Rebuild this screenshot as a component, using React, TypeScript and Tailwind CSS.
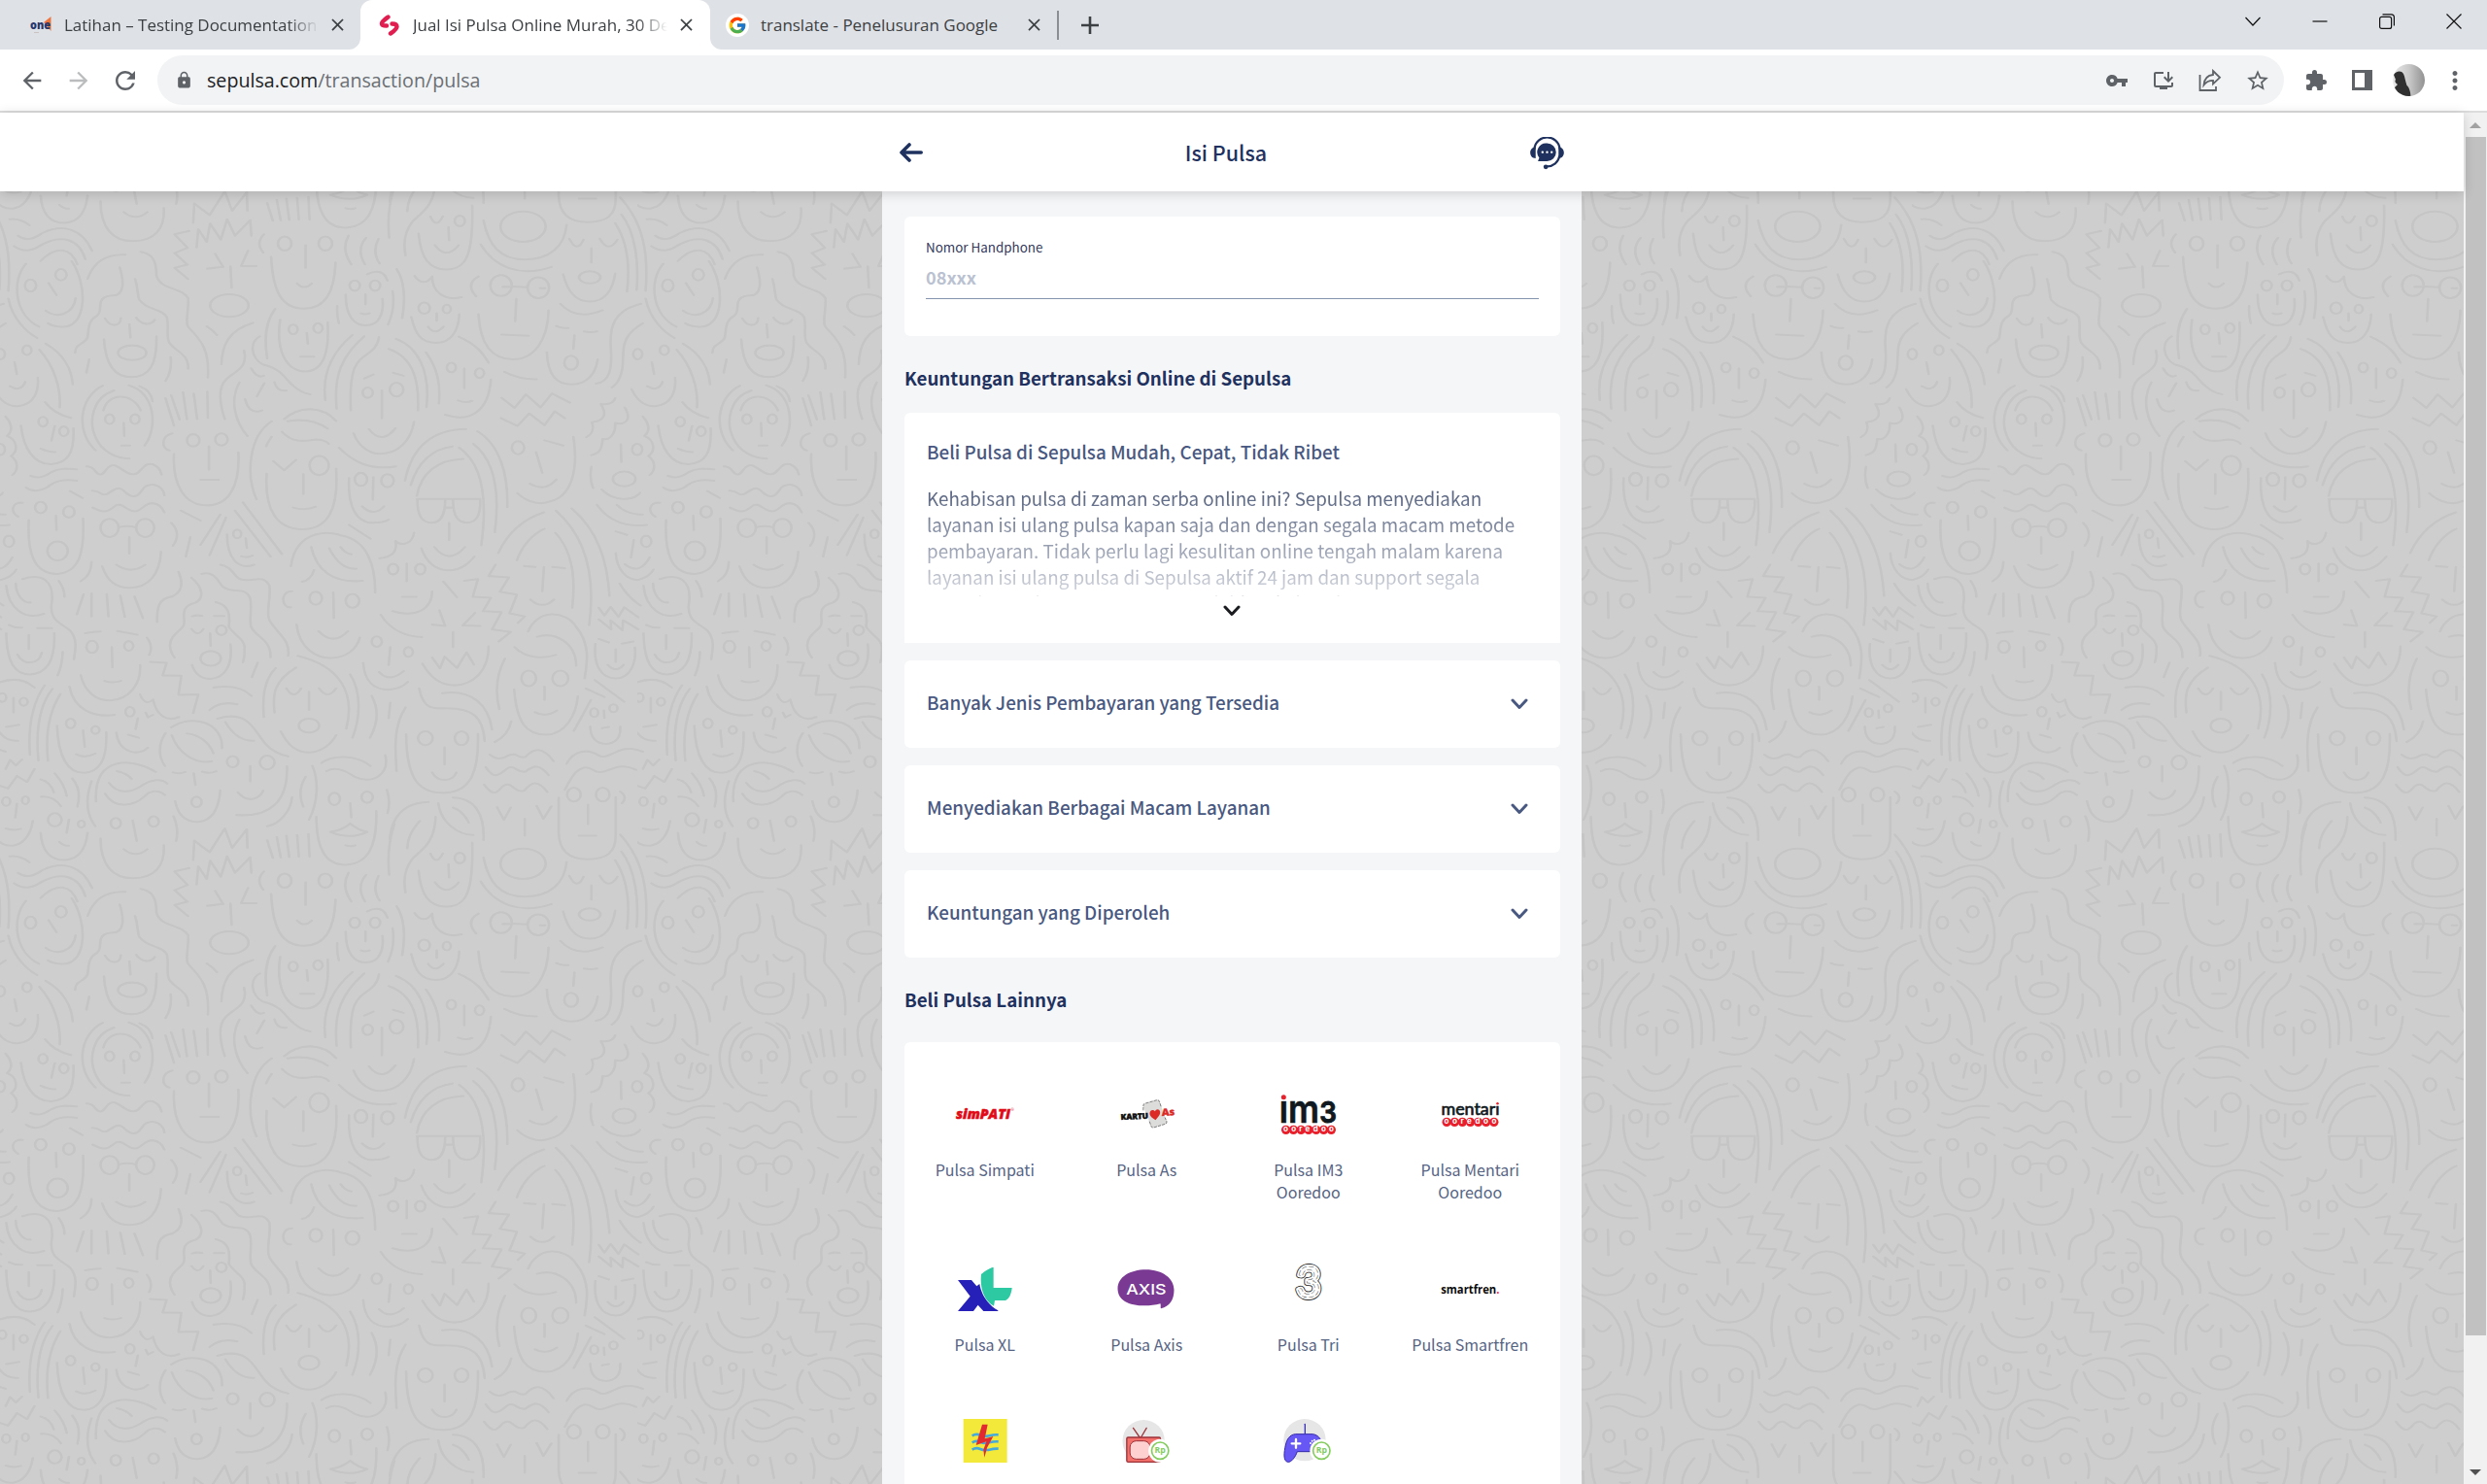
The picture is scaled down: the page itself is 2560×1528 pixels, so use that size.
import React from 'react';
import {
  MdArrowBack,
  MdArrowForward,
  MdClose,
  MdExtension,
  MdInstallDesktop,
  MdLock,
  MdMoreVert,
  MdRefresh,
  MdStarBorder,
  MdVpnKey,
} from 'react-icons/md';
import { FcGoogle } from 'react-icons/fc';

/* ---------- Doodle wallpaper ---------- */

// One tile is drawn in a 1128.2 x 1469.4 grid and shown at 656 x 656 pixels.
const TILE_W = 1128.2;
const TILE_H = 1469.4;

const STROKES = [
  'M72 1495Q75 1558 115 1558Q150 1555 155 1495M105 1516Q112 1525 122 1525M122 1465L118 1495',
  'M30 1428L27 1460M10 1485Q25 1491 37 1486M-10 1500C0 1535 50 1540 58 1468M-6 1384L14 1393L30 1364L48 1378L61 1348M10 1348L18 1327L28 1340L39 1326',
  'M72 1372Q90 1378 95 1402M97 1358Q115 1385 118 1410M128 1370Q145 1395 137 1435M73 1412Q95 1410 108 1434',
  'M170 1423C165 1310 240 1325 276 1355M162 1376Q145 1440 169 1480M207 1353Q225 1358 233 1371M193 1380C210 1410 235 1400 250 1387C265 1373 285 1368 296 1382M186 1405C205 1445 240 1430 255 1412C265 1398 280 1394 292 1408',
  'M235 1467L242 1514M219 1533Q240 1555 261 1533M178 1508C178 1570 200 1600 235 1600C275 1600 292 1570 290 1524M307 1457Q317 1485 312 1514',
  'M342 1558L344 1513L371 1540L398 1485L411 1530L437 1487L438 1530M348 145L351 103L366 132L372 90L391 127L402 80L416 118L443 82L445 118M335 107L309 115L332 146L309 158L332 185L309 192L333 218',
  'M473 1512L483 1553M490 1505L497 1552M507 1502L512 1551M526 1500L529 1550M546 1498L548 1550',
  'M541 140L541 192M526 228Q538 245 552 228M480 167C483 250 500 286 538 286C575 286 592 250 594 180M467 115Q452 135 466 157',
  'M620 1427L622 1460M585 1493Q605 1490 620 1474Q635 1490 650 1493Q620 1512 585 1493M612 1524Q620 1528 629 1524M560 1458C560 1530 575 1569 612 1569C650 1567 668 1530 666 1445',
  'M578 1353C595 1340 615 1355 628 1366C660 1385 690 1360 682 1316M569 1334C590 1315 630 1315 656 1341M541 1366Q525 1400 537 1435M553 1341C563 1370 565 1420 547 1465M685 1396Q692 1425 686 1450M698 1475Q684 1530 689 1592',
  'M617 118Q603 150 622 184M648 123Q630 150 646 184M670 125Q658 155 672 182',
  'M690 1510C695 1440 730 1425 759 1424M743 1468C725 1495 722 1510 721 1531M776 1427C780 1470 810 1500 838 1500M802 1437Q820 1445 830 1472M802 1414C840 1415 858 1450 856 1512',
  'M771 1458C770 1520 745 1535 730 1555C718 1575 713 1600 718 1633M762 1543Q772 1573 784 1543M794 98L795 129M770 140Q790 175 812 140M741 113C745 170 760 196 790 196C825 196 838 165 836 48',
  'M856 83C865 140 885 173 928 173C975 173 1000 140 1003 93M851 138C875 190 920 215 976 190M880 1436L892 1465L904 1437M950 1433L962 1463L976 1434M929 1463L929 1502',
  'M1041 1430L1041 1475M1025 1502H1055M989 1414L989 1495C990 1540 1010 1556 1040 1556C1075 1556 1090 1540 1090 1500L1090 1413M1098 1400Q1112 1412 1101 1427M1000 1396C1010 1370 1025 1330 1050 1350C1070 1370 1090 1325 1126 1350M1003 1336C1015 1305 1040 1300 1060 1317C1080 1330 1095 1285 1138 1308',
  'M867 1315C880 1328 888 1325 900 1317C915 1308 918 1325 930 1320C945 1300 960 1295 980 1330M860 1344C875 1375 885 1360 897 1348C910 1335 915 1358 930 1354C945 1340 955 1335 971 1362M857 1384C875 1415 880 1400 890 1388C905 1372 910 1405 928 1398C940 1380 950 1370 969 1401',
  'M1008 125Q1022 160 1033 127M1062 125Q1078 160 1093 127M1047 147V180M997 207C1005 250 1020 270 1044 270C1070 270 1085 245 1089 205M992 275Q1020 315 1067 290M1089 89C1110 130 1116 180 1110 247M1100 69C1125 110 1131 180 1127 243M1098 30C1140 90 1148 160 1143 245M1143 263C1150 310 1175 340 1194 354',
  'M86 227L100 255M81 291C100 310 130 300 134 262M46 183C20 220 25 300 69 328M72 176C100 140 125 145 137 184M127 177C155 230 155 330 110 328Q95 328 85 320M32 118C50 135 65 120 75 112C110 90 145 100 163 153M25 142C45 160 60 150 75 138C110 115 140 125 151 172M17 80C30 78 45 85 52 94',
  'M155 218C165 180 185 160 222 162M212 191C220 225 220 255 200 256C165 258 185 290 172 302C155 315 158 330 155 352C150 370 133 365 133 388M239 218C243 230 243 250 246 265C260 290 285 285 295 305C300 325 293 350 300 365C310 385 335 390 333 425M249 155C270 160 277 175 277 210C285 245 320 235 333 262C335 285 328 310 332 326C345 350 372 365 368 445',
  'M186 309C195 330 213 328 214 308M241 307C250 325 268 325 274 312M229 322L231 353M184 357C187 420 205 444 232 444C265 444 278 415 277 350M302 398Q305 430 293 453M158 403L153 434',
  'M381 160L395 190L367 194M439 153L427 188L454 188M408 189L410 238',
  'M647 253V276M639 297Q647 301 654 297M612 254C612 300 625 325 648 325C672 325 680 295 677 263M650 207Q678 190 686 222M702 195C716 220 718 265 712 308M695 246Q700 285 687 323M597 280Q596 300 600 320',
  'M773 297V314M758 328Q770 350 785 328M728 305C735 345 745 365 772 365C800 365 812 335 813 299M734 211Q750 238 765 212C765 245 785 270 817 260',
  'M906 235L934 237M890 236H901M956 239H965M914 264L912 315M888 346L936 349M847 299C850 370 870 403 908 403C945 403 970 360 971 290M847 212Q823 230 843 258',
  'M985 326Q992 331 1006 331M1034 339Q1045 342 1057 339M1017 348L1015 379M968 387C970 440 985 461 1012 461C1040 461 1055 435 1058 403M1135 275C1085 290 1080 330 1081 370C1085 430 1078 455 1055 459M1138 320C1105 345 1103 370 1103 400C1103 440 1093 460 1083 468',
  'M1154 410L1158 437M1146 465Q1165 480 1173 455M1118 472C1130 505 1145 512 1160 511C1190 508 1197 475 1195 445M1198 381C1225 420 1236 470 1234 514M1209 367C1240 390 1255 425 1257 461M1208 502Q1225 530 1254 538',
  'M543 342L545 367M532 397H556M496 312C488 380 505 430 541 431C575 430 583 380 580 318M487 287C468 320 468 360 473 401',
  'M448 319C405 335 393 370 392 415M432 383C440 425 415 430 400 450C385 470 390 510 398 541M424 456C405 500 418 550 438 580M460 350C440 365 445 400 465 415C500 425 505 450 520 465Q533 480 549 484M445 424Q455 448 467 441M486 456Q490 478 507 475M468 458L455 488M434 495C438 520 450 528 464 521M366 327Q378 337 384 347',
  'M624 347C585 390 570 440 576 497M645 350C605 395 590 440 596 517M671 352C665 395 640 385 627 425C620 450 620 490 621 521M688 379C735 400 742 460 740 521M701 356C740 375 762 430 755 513M754 387C775 425 780 460 777 505M645 447L661 438M696 434L714 441M676 475V539M653 564Q676 602 700 562M626 574C635 605 655 621 673 621C705 621 728 590 733 547M600 607C625 640 655 660 701 650',
  'M822 424V470M811 498Q825 505 836 499M788 531C830 550 865 525 869 450M812 351C845 370 855 390 865 411M893 432Q920 450 950 449',
  'M888 492L911 515L931 484L957 514L977 482L1009 503M887 539L916 557L937 528L964 555L982 523L1000 539',
  'M964 590L997 602M949 617L960 665M938 690Q965 710 985 680M916 712C935 735 960 740 975 730C1010 720 1025 660 1015 582',
  'M1064 506Q1085 510 1089 493M1064 507C1075 530 1070 545 1048 548C1053 570 1045 578 1038 583M1106 514C1120 545 1105 555 1089 550C1090 575 1080 590 1067 587C1065 610 1062 620 1047 624M1138 535C1155 560 1145 575 1141 580C1160 590 1160 615 1148 626C1162 640 1160 660 1150 670M1099 599L1100 640M1065 703C1085 730 1120 732 1133 711M1047 651Q1043 680 1050 700',
  'M97 557L91 591M72 609Q85 617 98 617M37 556C42 610 60 645 90 645C120 643 132 620 130 562',
  'M182 464C140 490 133 570 169 613M202 475C165 490 155 545 170 585C180 615 205 632 229 632M228 463C275 480 280 560 256 602M247 465Q268 475 270 500M183 521C190 480 235 478 249 521M219 550L220 580M215 602H230',
  'M293 493L308 556M303 486L318 542M324 479L331 541M343 482L349 541M367 478L368 538',
  'M370 604V658M355 681H387M308 621C305 690 325 740 367 740C405 740 425 695 422 618M305 574C285 580 285 610 300 613',
  'M484 638L503 659L524 635M537 668V714M519 745Q540 753 559 743M472 667C468 750 490 795 535 795C580 795 600 750 595 655M481 546C440 580 435 670 454 726M503 541C530 510 570 510 595 545M509 546C535 540 560 545 580 563M499 570C520 600 545 590 558 588Q575 588 582 598M481 582Q475 592 471 604',
  'M661 675L660 727M641 742Q662 768 680 742M618 677C615 740 630 780 660 780Q678 780 688 773',
  'M738 725H850M739 725C738 765 748 780 764 780C780 780 788 765 788 727M802 727C802 765 810 780 828 780C843 778 851 765 850 725M788 745H802M795 780V820M769 836Q795 878 823 836M746 839C755 875 775 890 795 890C820 888 832 870 840 858',
  'M717 683C730 600 770 565 825 564M727 693C740 640 765 610 801 604M738 718C745 665 775 635 820 633M813 607C850 640 865 710 852 832M838 598C875 635 885 710 876 802M845 569C885 600 900 670 898 744',
  'M153 650Q163 650 168 660C180 680 185 660 192 652C205 635 218 668 235 668C250 670 252 640 270 645Q283 650 286 669M163 706C180 705 178 722 192 712C210 695 215 700 222 710C245 735 250 700 258 696C275 685 290 700 291 717M164 745C180 755 188 758 200 745C212 730 220 745 232 752C250 760 252 735 270 735Q285 737 291 756',
  'M54 672C70 680 80 672 90 664C105 653 120 655 136 657M46 699C60 712 78 705 90 692C105 680 120 680 136 683M124 707L146 723',
  'M99 764L100 797M51 774C48 850 60 898 101 898C140 895 150 850 147 770M40 734C20 732 18 755 32 766',
  'M210 791Q225 785 241 791M229 813V851M206 877Q232 900 257 877M181 881C190 915 205 930 230 930C262 930 283 900 285 847M303 780Q322 805 306 833M162 870Q162 900 143 915',
  'M320 752L355 775M337 813L329 858M390 761L355 831M400 768L371 855M430 733L499 852M416 752L479 858M435 816L437 838M427 857Q437 862 447 856M402 807C402 860 420 890 450 877',
  'M515 880C525 790 590 800 605 810C650 820 665 880 664 941M551 836C560 890 590 920 642 914M583 839C595 870 610 888 631 886M603 836Q610 850 622 853M556 889Q550 912 535 916M590 941L591 1000M564 1030Q590 1065 616 1030M525 1015C530 1070 560 1093 588 1092C615 1090 632 1070 637 1045M517 938C495 938 498 978 515 975',
  'M618 785L656 817M733 803C730 830 710 835 700 822C705 850 690 860 672 862M720 874V915M712 951H737M695 984C735 1000 765 980 765 938M785 916L809 952',
  'M877 877L865 903L901 906L885 939L915 946L902 989L929 996L917 1011M822 914L846 910L837 951L869 953L855 984L888 986L871 1026L904 1032L883 1054',
  'M778 982L788 1018L765 1015M841 988L819 1017L850 1018M802 1032V1067M765 1091L779 1116L787 1089L809 1115L826 1079L839 1107M748 1105C765 1145 785 1155 805 1155C840 1153 865 1120 865 1065M674 992C690 1025 715 1042 747 1044',
  'M882 850C900 800 930 770 963 756M915 867C925 830 945 805 964 794M983 803C1010 840 1020 900 1013 976M984 752C1035 810 1055 900 1043 1016M1012 747C1060 800 1075 870 1079 949M928 880L948 882M978 882L1000 885M963 882L960 938M939 957Q960 982 981 957',
  'M1060 976L1070 994L1081 974L1095 997L1105 975L1130 998M1060 1003L1082 1026L1081 1005L1102 1028L1103 1005L1130 1026M1060 1048L1078 1056M1101 1059L1121 1054M1090 1072V1101M1076 1108Q1090 1128 1104 1108M1054 1059C1050 1110 1065 1139 1090 1139C1115 1139 1127 1105 1124 1068',
  'M1097 920Q1110 950 1134 971M1057 739C1080 780 1110 790 1145 785M1092 739Q1110 762 1138 761M1090 800L1110 808M1122 820L1117 860M1106 876C1125 895 1140 885 1150 860M1090 850C1092 890 1110 912 1130 912Q1150 905 1157 888',
  'M11 925C15 980 45 1005 78 990M28 920C28 945 40 965 54 964M40 910C75 895 95 915 92 960C85 1010 110 1010 125 1030C138 1050 133 1075 131 1095M104 914Q115 935 114 951M16 1016Q27 1023 39 1022M66 1023H92M51 1039V1071M31 1084C40 1110 70 1108 74 1080M11 1035C12 1100 25 1130 53 1130C85 1128 98 1095 96 1035M111 1078Q110 1110 102 1132',
  'M148 945L136 991M162 943V996M189 945L192 996M213 948L221 997M238 950L253 1000M151 1035Q165 1031 178 1031M208 1030L243 1038M198 1067L199 1114M185 1145Q200 1151 214 1145M143 1132C150 1170 170 1190 195 1190C230 1188 250 1150 248 1108M260 1045Q272 1065 264 1085M123 1158C130 1210 165 1230 203 1223',
  'M316 893C325 920 322 940 305 950C280 955 278 975 278 1009M339 907C360 930 362 955 345 965C315 975 330 1000 325 1017C320 1030 300 1040 301 1064Q302 1080 309 1091M382 963C405 970 408 990 405 1020C415 1040 435 1050 433 1070Q433 1090 430 1102M357 898C380 890 385 915 395 928C410 945 435 925 443 955C447 980 440 1005 445 1022C455 1045 480 1050 479 1090M390 877C410 880 415 905 425 910C445 920 465 895 477 925C480 960 470 985 477 1005C490 1035 515 1050 510 1087',
  'M340 996Q350 992 358 995M379 995H397M339 1025Q350 1045 360 1025M372 1035L373 1064M340 1108C345 1130 358 1140 372 1140C400 1138 412 1105 408 1060M456 1103L446 1136',
  'M266 1101L295 1103L288 1132L321 1133L316 1177L351 1176L342 1219M378 1160C405 1155 430 1160 445 1179M371 1212Q390 1190 420 1199M248 1176C255 1200 265 1195 271 1188C277 1225 295 1240 317 1228M258 1218L262 1229L271 1223M244 1231L240 1256M227 1269L246 1276M206 1264C210 1310 245 1320 262 1299',
  'M147 1259L150 1297M135 1314Q150 1325 169 1312M101 1248C103 1320 120 1357 149 1357C180 1355 190 1320 188 1263M79 1155C55 1200 50 1260 53 1315M93 1163C70 1200 63 1260 68 1328M107 1175C85 1220 80 1270 85 1329',
  'M-5 1150Q35 1130 61 1160M24 1184V1218M11 1251L34 1246M-14 1195C-12 1260 5 1285 32 1283',
  'M303 1252C340 1220 395 1240 393 1300M293 1265C280 1290 280 1320 292 1341M304 1270C315 1310 345 1338 375 1330M331 1266C350 1268 370 1285 378 1312M385 1232C440 1210 450 1260 470 1290Q485 1312 510 1319M399 1240Q420 1285 450 1283',
  'M306 1356Q318 1360 328 1355M358 1354Q370 1360 383 1353M343 1358L346 1385M310 1422C315 1455 330 1470 350 1470C380 1468 388 1430 390 1397M443 1341V1377M421 1402C440 1430 460 1415 466 1398M508 1342C510 1420 480 1460 419 1454M517 1413C515 1445 495 1475 473 1480',
  'M488 1115C465 1145 465 1190 467 1228M524 1114C485 1145 482 1175 486 1218M527 1087C600 1110 630 1170 613 1255M620 1130C640 1170 638 1230 624 1276M658 1179Q677 1225 655 1276M507 1162Q520 1190 533 1162M565 1162Q580 1190 595 1162M547 1170V1212M497 1261C510 1295 525 1310 548 1310C570 1308 587 1290 595 1270M691 1195L688 1231',
  'M691 1067L688 1108M671 1124Q690 1150 715 1122M643 1103C645 1145 662 1165 688 1165Q710 1163 722 1147',
  'M718 1206C695 1250 700 1310 702 1353M742 1162C750 1215 770 1208 790 1208C835 1208 855 1225 858 1284M783 1173C835 1163 865 1200 871 1257M905 1238Q900 1270 876 1286M787 1298V1338M765 1356C775 1380 802 1378 808 1356M719 1268C720 1360 735 1403 785 1403C835 1403 848 1350 846 1267',
  'M894 1093C875 1140 878 1180 884 1210M911 1067C930 1092 960 1095 984 1085M951 1043C985 1030 1020 1060 1020 1110M935 1031C950 980 1000 980 1020 1020C1045 1060 1040 1100 1035 1139M964 1158V1189M947 1217Q967 1230 986 1213M910 1164C915 1240 930 1268 967 1269C1000 1268 1020 1225 1023 1180',
  'M1037 1162L1070 1182M1053 1143L1105 1193M1046 1189L1016 1260M1069 1213L1070 1230M1066 1254L1078 1251M1045 1250C1045 1275 1055 1290 1073 1290Q1100 1288 1098 1250',
].join('');

// cx, cy, rx, ry
const RINGS: number[][] = [
  [97, 1465, 12, 15], [144, 1475, 6, 8], [11, 1423, 7, 10], [45, 1420, 6, 9], [205, 1473, 9, 12], [272, 1469, 9, 12],
  [504, 136, 12, 16], [576, 136, 12, 16], [592, 1417, 10, 14], [650, 1413, 10, 13], [814, 84, 9, 12], [926, 97, 40, 35],
  [1016, 1407, 12, 16], [1067, 1407, 12, 16], [1044, 214, 19, 14], [54, 233, 10, 14], [108, 208, 10, 13], [234, 388, 25, 17],
  [406, 279, 34, 26], [628, 233, 9, 12], [664, 233, 9, 12], [751, 285, 10, 13], [791, 287, 7, 10], [887, 233, 19, 24],
  [953, 238, 19, 24], [1011, 411, 12, 16], [1129, 391, 8, 12], [1176, 382, 8, 11], [519, 334, 8, 11], [563, 331, 8, 11],
  [651, 480, 9, 12], [702, 473, 12, 16], [799, 422, 8, 11], [849, 435, 8, 11], [917, 607, 11, 15], [1128, 611, 9, 13],
  [1105, 679, 20, 17], [76, 547, 8, 11], [113, 569, 8, 11], [194, 541, 8, 11], [239, 541, 8, 11], [342, 590, 11, 14],
  [392, 588, 11, 14], [565, 648, 17, 22], [639, 680, 11, 15], [686, 683, 11, 15], [72, 745, 10, 13], [122, 755, 10, 13],
  [102, 845, 18, 22], [194, 792, 16, 21], [257, 792, 16, 21], [420, 806, 7, 10], [559, 954, 11, 15], [624, 960, 12, 16],
  [696, 887, 9, 12], [744, 887, 9, 12], [1144, 823, 9, 13], [163, 1066, 10, 14], [228, 1064, 8, 11], [392, 1028, 9, 11],
  [373, 1093, 18, 17], [230, 1216, 8, 11], [125, 1243, 8, 11], [169, 1258, 7, 9], [4, 1183, 7, 10], [42, 1193, 7, 9],
  [348, 1424, 9, 12], [412, 1331, 10, 13], [473, 1333, 13, 16], [547, 1248, 18, 16], [667, 1054, 9, 12], [723, 1078, 8, 11],
  [753, 1277, 13, 16], [817, 1277, 12, 16], [936, 1139, 13, 18], [992, 1139, 14, 18], [1052, 1218, 7, 10], [1086, 1208, 7, 9],
];

function Wallpaper() {
  const copies = [0, -1].flatMap((i) => [0, -1].map((j) => [i * TILE_W, j * TILE_H]));
  return (
    <svg className="absolute inset-0 h-full w-full" aria-hidden="true">
      <defs>
        <g id="faces" fill="none" stroke="#c5c5c5" strokeWidth="4.6" strokeLinecap="round" strokeLinejoin="round">
          <path d={STROKES} />
          {RINGS.map(([cx, cy, rx, ry], i) => (
            <ellipse key={i} cx={cx} cy={cy} rx={rx} ry={ry} />
          ))}
        </g>
        <pattern id="tile" width="656" height="656" y="-7" patternUnits="userSpaceOnUse">
          <g transform={`scale(${656 / TILE_W} ${656 / TILE_H})`}>
            {copies.map(([x, y], i) => (
              <use key={i} href="#faces" x={x} y={y} />
            ))}
          </g>
        </pattern>
      </defs>
      <rect width="100%" height="100%" fill="url(#tile)" />
    </svg>
  );
}

/* ---------- Browser chrome ---------- */

function Flare({ side }: { side: 'left' | 'right' }) {
  return (
    <svg
      viewBox="0 0 12 12"
      className={side === 'left' ? 'absolute bottom-0 -left-3 h-3 w-3' : 'absolute bottom-0 -right-3 h-3 w-3'}
    >
      <path d={side === 'left' ? 'M12 0V12H0A12 12 0 0 0 12 0Z' : 'M0 0V12H12A12 12 0 0 1 0 0Z'} fill="#fff" />
    </svg>
  );
}

function TabStrip() {
  return (
    <div className="flex h-[51px] shrink-0 items-stretch bg-[#dee1e6] font-['Open_Sans',sans-serif] text-[16.97px] text-[#3c4043]">
      <div className="flex w-[371px] items-center pl-[31px]">
        <svg viewBox="0 0 22 22" className="h-[22px] w-[22px] overflow-visible">
          <path d="M14 8L21.500 2V17Z" fill="#f0763f" />
          <text x="0" y="15" fontSize="13" fontWeight="800" fill="#26356b" textLength="21" lengthAdjust="spacingAndGlyphs">
            one
          </text>
          <path d="M4 18.500H9" stroke="#c9c3c3" strokeWidth="1" />
        </svg>
        <div className="ml-[13px] w-[262px] overflow-hidden whitespace-nowrap [mask-image:linear-gradient(90deg,#000_88%,transparent)]">
          Latihan – Testing Documentation
        </div>
        <MdClose className="ml-[9px] size-[21px]" />
      </div>
      <div className="relative flex w-[360px] items-center rounded-t-xl bg-white pl-[19px]">
        <Flare side="left" />
        <Flare side="right" />
        <svg viewBox="0 0 22 22" className="h-[22px] w-[22px]" fill="none" stroke="#e01e50" strokeLinecap="round" strokeLinejoin="round">
          <path d="M9.500 2.500C6 5 3 7 3 9.500C3 11.500 5.500 11.500 8 11.500" strokeWidth="4.400" />
          <path d="M13.500 9.500C16.500 9.500 18.500 10.500 18.500 12.500C18.500 15 15.500 17 12 19.500" strokeWidth="4.400" />
        </svg>
        <div className="ml-[13px] w-[262px] overflow-hidden whitespace-nowrap [mask-image:linear-gradient(90deg,#000_88%,transparent)]">
          Jual Isi Pulsa Online Murah, 30 Detik
        </div>
        <MdClose className="ml-[9px] size-[21px]" />
      </div>
      <div className="flex w-[359px] items-center pl-4">
        <div className="grid size-6 place-items-center rounded-full bg-white">
          <FcGoogle className="size-5" />
        </div>
        <div className="ml-3 w-[260px] whitespace-nowrap">translate - Penelusuran Google</div>
        <MdClose className="ml-[11px] size-[21px]" />
        <div className="ml-[13px] h-[30px] w-[1.5px] bg-[#8b8e93]" />
      </div>
      <div className="flex items-center pl-[23px]">
        <svg viewBox="0 0 18 18" className="size-[18px]" stroke="#3c4043" strokeWidth="2.6">
          <path d="M9 0V18M0 9H18" />
        </svg>
      </div>
      <div className="ml-auto flex items-center gap-[53px] pr-[26px] pb-[8px]">
        <svg viewBox="0 0 16 16" className="size-4" fill="none" stroke="#111" strokeWidth="1.200">
          <path d="M.5 4L8 12L15.500 4" />
        </svg>
        <svg viewBox="0 0 16 16" className="size-4" stroke="#111" strokeWidth="1.200">
          <path d="M.5 8H15.500" />
        </svg>
        <svg viewBox="0 0 16 16" className="size-4" fill="none" stroke="#111" strokeWidth="1.200">
          <rect x=".6" y="3.400" width="12" height="12" rx="2" />
          <path d="M3.500 .8H12.500Q15.400 .8 15.400 3.700V12.500" />
        </svg>
        <svg viewBox="0 0 16 16" className="size-4" stroke="#111" strokeWidth="1.200">
          <path d="M.5 .5L15.500 15.500M15.500 .5L.5 15.500" />
        </svg>
      </div>
    </div>
  );
}

function ShareIcon() {
  return (
    <svg viewBox="0 0 24 24" className="size-6" fill="none" stroke="#5f6368" strokeWidth="1.800">
      <path d="M1.500 6V22H18V18" />
      <path d="M15 2L22 8.800L15 15.500V11.800C11 11.800 8 13 5.500 16.500C6 11 9 6.500 15 6Z" strokeLinejoin="miter" />
    </svg>
  );
}

function Toolbar() {
  return (
    <div className="flex h-[65px] shrink-0 items-center border-b-2 border-[#dcdcdd] bg-white text-[#5f6368]">
      <MdArrowBack className="ml-[19px] size-[28px]" />
      <MdArrowForward className="ml-5 size-[28px] text-[#babcbe]" />
      <MdRefresh className="ml-[19px] size-[30px]" />
      <div className="ml-[18px] flex h-[51px] w-[2189px] items-center rounded-full bg-[#f1f3f4] pl-[18px]">
        <MdLock className="size-[19px]" />
        <div className="ml-[14px] font-['Open_Sans',sans-serif] text-[19.65px] leading-none text-[#202124]">
          sepulsa.com<span className="text-[#6b6f74]">/transaction/pulsa</span>
        </div>
        <div className="ml-auto flex items-center gap-6 pr-[14px]">
          <MdVpnKey className="size-6" />
          <MdInstallDesktop className="size-6" />
          <ShareIcon />
          <MdStarBorder className="size-[26px]" />
        </div>
      </div>
      <MdExtension className="ml-[21px] size-6" />
      <svg viewBox="0 0 21 21" className="ml-[25px] size-[21px]">
        <path d="M0 0H21V21H0ZM3 3V18H13V3Z" fill="#5f6368" fillRule="evenodd" />
      </svg>
      <svg viewBox="0 0 33 33" className="ml-[21px] size-[33px]">
        <defs>
          <linearGradient id="photo" x1="0" x2="1">
            <stop offset="0" stopColor="#e9e9e9" />
            <stop offset=".5" stopColor="#c9c9c9" />
            <stop offset="1" stopColor="#929292" />
          </linearGradient>
          <clipPath id="round">
            <circle cx="16.5" cy="16.5" r="16.5" />
          </clipPath>
        </defs>
        <g clipPath="url(#round)">
          <rect width="33" height="33" fill="url(#photo)" />
          <path d="M1 11C3 7 9 6 11 10C12.500 13 13 18 14.500 22C17 24 18.500 29 18.500 34H8C7 29 1 27 2 24L5 21C2 19 2 17 3 16Z" fill="#303030" />
        </g>
      </svg>
      <MdMoreVert className="ml-4 size-[30px]" />
    </div>
  );
}

function Scrollbar() {
  return (
    <div className="flex w-6 shrink-0 flex-col items-center bg-[#f1f1f1]">
      <svg viewBox="0 0 12 6" className="mt-[10px] h-[6px] w-3">
        <path d="M0 6L6 0L12 6Z" fill="#a3a3a3" />
      </svg>
      <div className="mt-[9px] h-[1234px] w-[21px] bg-[#c1c1c1]" />
      <svg viewBox="0 0 12 6" className="mt-auto mb-[9px] h-[6px] w-3">
        <path d="M0 0L6 6L12 0Z" fill="#505050" />
      </svg>
    </div>
  );
}

/* ---------- Provider logos ---------- */

// The logos share a 3x grid; dx and dy move its origin to the middle of the box.
function Logo({ dx, dy, children }: { dx: number; dy: number; children: React.ReactNode }) {
  return (
    <svg viewBox="-40 -30 80 60" className="h-[60px] w-20 shrink-0">
      <g transform={`translate(${dx} ${dy}) scale(.33333)`}>{children}</g>
    </svg>
  );
}

function Ooredoo({ x, y, width }: { x: number; y: number; width: number }) {
  const r = 14;
  const step = (width - 2 * r) / 6;
  return (
    <g>
      {[0, 1, 2, 3, 4, 5, 6].map((i) => (
        <circle key={i} cx={x + r + i * step} cy={y} r={r} fill="#e8202c" />
      ))}
      <text
        x={x + 6}
        y={y + 6.5}
        fontSize="24"
        fontWeight="700"
        fill="#fff"
        textLength={width - 12}
        className="font-['Inter',sans-serif]"
      >
        ooredoo
      </text>
    </g>
  );
}

function RpBadge({ x }: { x: number }) {
  return (
    <g>
      <circle cx={x} cy="125" r="36" fill="#fff" />
      <circle cx={x} cy="125" r="26" fill="#fff" stroke="#84cc5e" strokeWidth="5" />
      <text x={x} y="133" textAnchor="middle" fontSize="26" fontWeight="700" fill="#84cc5e" className="font-['Open_Sans',sans-serif]">
        Rp
      </text>
    </g>
  );
}

const simpati = (
  <Logo dx={-74} dy={-37}>
    <g fill="#e10a17" className="font-['Open_Sans',sans-serif]">
      <text x="132" y="126" fontSize="43" fontWeight="800" fontStyle="italic" stroke="#e10a17" strokeWidth="1.5" textLength="168" lengthAdjust="spacingAndGlyphs">
        simPATI
      </text>
      <text x="302" y="103" fontSize="11">®</text>
    </g>
  </Logo>
);

const kartuAs = (
  <Logo dx={-240.5} dy={-37}>
    <path d="M714 79L751 68Q757 67 759 73L781 133Q783 140 777 142L741 153Q735 154 733 148L709 88Q707 82 714 79Z" fill="#dcdcda" />
    <path d="M709 100V86Q708 80 716 78L751 68Q757 67 759 73L764 88M728 134L733 148Q735 154 741 153L777 142Q783 140 781 133L776 122" fill="none" stroke="#444" strokeWidth="2" strokeDasharray="10 3" />
    <g className="font-['Open_Sans',sans-serif]" fontWeight="800" transform="rotate(-3 722 112)">
      <text x="639" y="125" fontSize="24" stroke="#0c0c0c" strokeWidth="1.5" textLength="85" lengthAdjust="spacingAndGlyphs" fill="#0c0c0c">
        KARTU
      </text>
      <text x="766" y="119" fontSize="30" fill="#dc2a26" stroke="#dc2a26" textLength="40" lengthAdjust="spacingAndGlyphs">
        As
      </text>
    </g>
    <path d="M747 130C738 124 728 118 729 108C730 98 740 96 745 103C749 94 760 95 761 105C762 115 753 121 747 130Z" fill="#dc2a26" />
  </Logo>
);

const im3 = (
  <Logo dx={-67} dy={-37}>
    <g fill="#101820" className="font-['Inter',sans-serif]" fontWeight="600">
      <text x="110" y="139" fontSize="119" textLength="124" lengthAdjust="spacingAndGlyphs" stroke="#101820" strokeWidth="2">im</text>
      <text x="235" y="139" fontSize="91" textLength="53" lengthAdjust="spacingAndGlyphs" stroke="#101820" strokeWidth="3">3</text>
    </g>
    <rect x="112" y="30" width="26" height="40" fill="#fff" />
    <circle cx="124" cy="59" r="7.5" fill="#e8202c" />
    <Ooredoo x={117} y={160} width={168} />
  </Logo>
);

const mentari = (
  <Logo dx={-233.5} dy={-37}>
    <text x="609" y="113" fontSize="53" fontWeight="400" fill="#101820" stroke="#101820" strokeWidth="2" textLength="180" lengthAdjust="spacingAndGlyphs" className="font-['Lato',sans-serif]">
      mentari
    </text>
    <rect x="776" y="68" width="16" height="16" fill="#fff" />
    <circle cx="783" cy="79" r="3.8" fill="#e8202c" />
    <Ooredoo x={612} y={136} width={174} />
  </Logo>
);

const xl = (
  <Logo dx={-74} dy={-217}>
    <path d="M138 624H180L196 643L205 636C210 670 235 705 262 718V720H217L200 701L186 720H138L176 674Z" fill="#2620b8" />
    <path d="M244 585H248V648H305C303 668 296 682 285 687H252L249 704C222 690 205 655 210 606C220 597 232 590 244 585Z" fill="#2dc9a2" />
  </Logo>
);

const axis = (
  <Logo dx={-240.5} dy={-217}>
    <path d="M717 592C770 592 804 620 804 655C804 685 790 706 764 712C761 711 764 704 762 697C745 701 730 703 715 703C662 703 630 685 630 650C630 615 668 592 717 592Z" fill="#7a3a94" />
    <text x="656" y="668" fontSize="45" fontWeight="500" fill="#fff" textLength="124" lengthAdjust="spacingAndGlyphs" className="font-['Inter',sans-serif]">
      AXIS
    </text>
  </Logo>
);

const tri = (
  <Logo dx={-67} dy={-217}>
    <g className="font-['Lato',sans-serif]" fontSize="132" fontWeight="400" strokeLinejoin="round" textAnchor="middle">
      <text x="201" y="679" fill="none" stroke="#2b2b2b" strokeWidth="18">3</text>
      <text x="201" y="679" fill="#fff" stroke="#fff" strokeWidth="12.5">3</text>
      <text x="201" y="679" fill="#fff" stroke="#555" strokeWidth="1.6" strokeDasharray="16 6">3</text>
    </g>
  </Logo>
);

const smartfren = (
  <Logo dx={-233.5} dy={-217}>
    <text x="608" y="665" fontSize="38" fontWeight="700" fill="#0c0c0c" textLength="181" lengthAdjust="spacingAndGlyphs" className="font-['Open_Sans',sans-serif]">
      smartfren<tspan fill="#ee1f5f">.</tspan>
    </text>
  </Logo>
);

const pln = (
  <Logo dx={-34} dy={-32}>
    <rect x="35" y="27" width="135" height="135" fill="#f3e93a" />
    <path d="M62 79Q74 71 87 77T115 79T143 76M62 100Q74 92 87 98T115 100T143 97M62 122Q74 114 87 120T115 122T143 119" fill="none" stroke="#45a9dc" strokeWidth="8" />
    <path d="M93 44H110L101 88L127 81L108 116L100 146L97 122L106 97L74 108Z" fill="#e12b31" />
  </Logo>
);

const tv = (
  <Logo dx={-200.5} dy={-32}>
    <circle cx="590" cy="95" r="65" fill="#e6e6e6" />
    <path d="M558 55L578 84M599 55L582 84" stroke="#9c3a3f" strokeWidth="4" strokeLinecap="round" />
    <rect x="538" y="84" width="104" height="76" rx="4" fill="#f4706a" stroke="#9c3038" strokeWidth="4" />
    <rect x="548" y="95" width="62" height="56" rx="19" fill="#ffd0d0" stroke="#9c3038" strokeWidth="3" />
    <RpBadge x={641} />
  </Logo>
);

const game = (
  <Logo dx={-367} dy={-32}>
    <circle cx="1089" cy="92" r="65" fill="#e6e6e6" />
    <path d="M1090 43V72" stroke="#3d34b5" strokeWidth="4" strokeLinecap="round" />
    <path d="M1060 74H1115C1135 78 1145 95 1147 128H1066C1060 145 1048 162 1036 160C1022 156 1025 130 1030 108C1034 90 1042 76 1060 74Z" fill="#6757f5" stroke="#3428a8" strokeWidth="3" />
    <path d="M1062 90V116M1049 103H1075" stroke="#fff" strokeWidth="7" strokeLinecap="round" />
    <circle cx="1112" cy="95" r="3" fill="#fff" />
    <circle cx="1107" cy="102" r="3" fill="#fff" />
    <circle cx="1119" cy="92" r="3" fill="#fff" />
    <RpBadge x={1141} />
  </Logo>
);

/* ---------- Page ---------- */

function Chevron({ className }: { className: string }) {
  return (
    <svg viewBox="0 0 18 12" className={className} fill="none" stroke="currentColor" strokeWidth="3" strokeLinecap="round" strokeLinejoin="round">
      <path d="M2 2L9 9.500L16 2" />
    </svg>
  );
}

function Header() {
  return (
    <header className="relative z-10 flex h-[81px] shrink-0 justify-center bg-white pt-[2px] text-[#1f325f] shadow-[0_2px_12px_rgba(0,0,0,0.16)]">
      <div className="flex w-[720px] items-center justify-between pr-[18px] pl-[18px]">
        <svg viewBox="0 0 24 20" className="mb-px h-5 w-[34px] pr-[10px]" fill="none" stroke="#1f325f" strokeWidth="3.600" strokeLinecap="round" strokeLinejoin="round">
          <path d="M10 2L2 10L10 18M2.500 10H22.200" />
        </svg>
        <h1 className="mb-[2px] ml-[-11px] text-[21.5px] leading-none font-medium">Isi Pulsa</h1>
        <svg viewBox="45 31 104 100" className="h-[34px] w-[35px]" fill="#1f325f">
          <path d="M58 68C62 20 132 20 136 68M135 88C132 108 116 120 97 121" fill="none" stroke="#1f325f" strokeWidth="6.500" />
          <path d="M62 62V96C40 96 40 62 62 62ZM132 62V96C154 96 154 62 132 62Z" />
          <path d="M97 50A27 27 0 1 1 97 105H69L73 94A27 27 0 0 1 97 50Z" />
          <circle cx="93" cy="122" r="7" />
          <g fill="#fff">
            <circle cx="83" cy="77" r="3.500" />
            <circle cx="97" cy="77" r="3.500" />
            <circle cx="111" cy="77" r="3.500" />
          </g>
        </svg>
      </div>
    </header>
  );
}

function Accordion({ title }: { title: string }) {
  return (
    <div className="mt-[18px] flex h-[90px] shrink-0 items-center justify-between rounded-md bg-white pr-[33px] pl-6 text-[#485880]">
      <h3 className="mb-[5px] -ml-px text-[18.83px] leading-[27px] font-medium">{title}</h3>
      <Chevron className="h-3 w-[18px]" />
    </div>
  );
}

const ROW_ONE = [
  { logo: simpati, label: 'Pulsa Simpati' },
  { logo: kartuAs, label: 'Pulsa As' },
  { logo: im3, label: 'Pulsa IM3 Ooredoo' },
  { logo: mentari, label: 'Pulsa Mentari Ooredoo' },
];
const ROW_TWO = [
  { logo: xl, label: 'Pulsa XL' },
  { logo: axis, label: 'Pulsa Axis' },
  { logo: tri, label: 'Pulsa Tri' },
  { logo: smartfren, label: 'Pulsa Smartfren' },
];

function ProviderRow({ items }: { items: { logo: React.ReactNode; label: string }[] }) {
  return (
    <div className="grid h-[180px] w-[666px] grid-cols-4">
      {items.map((item) => (
        <div key={item.label} className="flex flex-col items-center px-5 pt-11 text-center">
          {item.logo}
          <span className="mt-4 -ml-px text-[16px] leading-[23px] text-[#566484]">{item.label}</span>
        </div>
      ))}
    </div>
  );
}

export default function App() {
  return (
    <div className="flex h-[1528px] w-[2560px] flex-col overflow-hidden bg-white">
      <TabStrip />
      <Toolbar />
      <div className="flex min-h-0 flex-1 font-['Noto_Sans_CJK_SC',sans-serif]">
        <div className="flex min-w-0 flex-1 flex-col">
          <Header />
          <div className="relative flex min-h-0 flex-1 justify-center bg-[#cecece]">
            <Wallpaper />
            <main className="relative flex w-[720px] flex-col overflow-hidden bg-[#f5f6f8] pt-[26px] pr-[22px] pl-[23px]">
              <section className="h-[123px] shrink-0 rounded-md bg-white px-[22px] pt-[22px]">
                <label className="block text-[13.4px] leading-[19px] text-[#333a5c]">Nomor Handphone</label>
                <div className="mt-[8px] h-[36px] border-b border-[#8494ae] text-[18.14px] leading-[26px] font-bold text-[#bac2d1]">08xxx</div>
              </section>
              <h2 className="mt-[29px] shrink-0 text-[18.73px] leading-[27px] font-bold text-[#1f325f]">Keuntungan Bertransaksi Online di Sepulsa</h2>
              <section className="mt-[23px] flex h-[237px] shrink-0 flex-col items-center rounded-t-md bg-white pt-[26px] pr-6 pl-[23px]">
                <h3 className="w-full text-[18.83px] leading-[27px] font-medium text-[#485880]">Beli Pulsa di Sepulsa Mudah, Cepat, Tidak Ribet</h3>
                <div className="mt-[21px] h-[115px] w-full overflow-hidden [mask-image:linear-gradient(180deg,#000_5%,rgb(0_0_0/0.25)_100%)] text-[18.8px] leading-[27px] text-[#56627f]">
                  <p className="w-[630px]">
                    Kehabisan pulsa di zaman serba online ini? Sepulsa menyediakan
                    <br />
                    layanan isi ulang pulsa kapan saja dan dengan segala macam metode
                    <br />
                    pembayaran. Tidak perlu lagi kesulitan online tengah malam karena
                    <br />
                    layanan isi ulang pulsa di Sepulsa aktif 24 jam dan support segala
                    <br />
                    metode pembayaran yang memudahkan kebutuhan
                  </p>
                </div>
                <Chevron className="mt-[9px] h-3 w-[18px] text-[#1b1c20]" />
              </section>
              <Accordion title="Banyak Jenis Pembayaran yang Tersedia" />
              <Accordion title="Menyediakan Berbagai Macam Layanan" />
              <Accordion title="Keuntungan yang Diperoleh" />
              <h2 className="mt-[29px] shrink-0 text-[18.73px] leading-[27px] font-bold text-[#1f325f]">Beli Pulsa Lainnya</h2>
              <section className="mt-[31px] h-[520px] shrink-0 rounded-md bg-white">
                <ProviderRow items={ROW_ONE} />
                <ProviderRow items={ROW_TWO} />
                <div className="grid w-[666px] grid-cols-4 justify-items-center pt-[21px]">
                  {pln}
                  {tv}
                  {game}
                </div>
              </section>
            </main>
          </div>
        </div>
        <Scrollbar />
      </div>
    </div>
  );
}
